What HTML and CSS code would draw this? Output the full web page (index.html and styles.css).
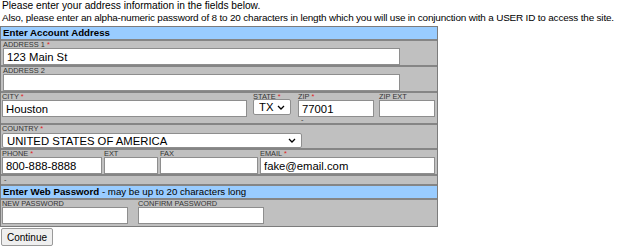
FILE: index.html
```html
<!DOCTYPE html>
<html>
<head>
<meta charset="utf-8">
<link rel="stylesheet" href="styles.css">
</head>
<body>
<div class="intro">
  <div>Please enter your address information in the fields below.</div>
  <div class="intro-2">Also, please enter an alpha-numeric password of 8 to 20 characters in length which you will use in conjunction with a USER ID to access the site.</div>
</div>
<form class="form">
  <div class="head">Enter Account Address</div>
  <div class="row">
    <div class="field w397"><label>ADDRESS 1 <span class="req">*</span></label><input type="text" value="123 Main St"></div>
  </div>
  <div class="row">
    <div class="field w397"><label>ADDRESS 2</label><input type="text" value=""></div>
  </div>
  <div class="row city-row">
    <div class="field w246"><label>CITY <span class="req">*</span></label><input type="text" value="Houston"></div>
    <div class="field w38 state"><label>STATE <span class="req">*</span></label><select><option>TX</option></select></div>
    <div class="field w76 zip"><label>ZIP <span class="req">*</span></label><input type="text" value="77001"><span class="dash">-</span></div>
    <div class="field w56 zipext"><label>ZIP EXT</label><input type="text" value=""></div>
  </div>
  <div class="row country-row">
    <div class="field w300"><label>COUNTRY <span class="req">*</span></label><select class="country"><option>UNITED STATES OF AMERICA</option></select></div>
  </div>
  <div class="row phone-row">
    <div class="field w100"><label>PHONE <span class="req">*</span></label><input type="text" value="800-888-8888"></div>
    <div class="field w54"><label>EXT</label><input type="text" value=""></div>
    <div class="field w98"><label>FAX</label><input type="text" value=""></div>
    <div class="field w176"><label>EMAIL <span class="req">*</span></label><input type="text" value="fake@email.com"></div>
  </div>
  <div class="row note-row"><span class="dash">-</span></div>
  <div class="head">Enter Web Password <span class="head-note">- may be up to 20 characters long</span></div>
  <div class="row pw-row">
    <div class="field w126"><label>NEW PASSWORD</label><input type="password" value=""></div>
    <div class="field w126"><label>CONFIRM PASSWORD</label><input type="password" value=""></div>
  </div>
</form>
<button class="btn" type="button">Continue</button>
</body>
</html>
```
FILE: styles.css
```css
body {
  margin: 0;
  padding: 0;
  font-family: "Liberation Sans", Arial, sans-serif;
  font-size: 10.2px;
  line-height: 11.5px;
  color: #000;
  background: #fff;
}

.intro {
  margin: 0 0 3px 2px;
  white-space: nowrap;
}

.intro-2 {
  font-size: 9.95px;
  letter-spacing: -0.18px;
}

.form {
  width: 436px;
  margin: 0;
  border: 1px solid #7c7c7c;
  background: #c0c0c0;
}

.head {
  background: #99ccff;
  font-weight: bold;
  font-size: 9.7px;
  line-height: 12px;
  height: 12px;
  padding: 0 2px;
  border-bottom: 2px solid #858585;
  white-space: nowrap;
}

.head-note {
  font-weight: normal;
}

.row {
  display: flex;
  align-items: flex-start;
  padding: 0 2px 0 1px;
  border-bottom: 2px solid #858585;
}

.field {
  display: flex;
  flex-direction: column;
}

.field label {
  display: block;
  font-size: 7.4px;
  line-height: 8px;
  height: 7px;
  color: #333;
  white-space: nowrap;
}

.req {
  color: #e02020;
}

.field input,
.field select {
  box-sizing: border-box;
  height: 17px;
  margin: 0;
  border: 1px solid #8e8e8e;
  background: #fff;
  font-family: "Liberation Sans", Arial, sans-serif;
  font-size: 11.3px;
  padding: 0 3px;
  color: #000;
  outline: none;
}

.field select {
  appearance: none;
  -webkit-appearance: none;
  border-radius: 2px;
  padding: 0 16px 0 5px;
  background-image: url("data:image/svg+xml,%3Csvg xmlns='http://www.w3.org/2000/svg' width='8' height='5' viewBox='0 0 8 5'%3E%3Cpath d='M1 1l3 3 3-3' fill='none' stroke='%23000' stroke-width='1.3'/%3E%3C/svg%3E");
  background-repeat: no-repeat;
  background-position: right 5px center;
}

.w397 { width: 397px; margin-left: 1px; }
.w246 { width: 246px; }
.w38 { width: 38px; }
.w76 { width: 76px; }
.w56 { width: 56px; }
.w300 { width: 300px; }
.w100 { width: 100px; }
.w54 { width: 54px; }
.w98 { width: 98px; }
.w176 { width: 176px; }
.w126 { width: 126px; }

.state { margin-left: 6px; }
.state select { height: 16px; margin-top: -1px; }
.zip { margin-left: 7px; }
.zipext { margin-left: 5px; }

.dash {
  display: block;
  font-size: 7.4px;
  line-height: 6px;
  height: 6px;
  padding-left: 3px;
  color: #333;
}

.country-row label { height: 8px; }
.country-row select { height: 15px; padding-left: 4px; }

.phone-row .field + .field { margin-left: 2px; }

.note-row {
  height: 8px;
  padding-left: 3px;
}

.note-row .dash {
  line-height: 7px;
  height: 8px;
  padding-left: 0;
}

.pw-row { padding-bottom: 2px; border-bottom: 0; }
.pw-row .field + .field { margin-left: 10px; }

.btn {
  display: block;
  margin: 1px 0 0 1px;
  font-family: "Liberation Sans", Arial, sans-serif;
  font-size: 10px;
  height: 18px;
  padding: 0 5px;
  border: 1px solid #9a9a9a;
  border-radius: 2px;
  background: #efefef;
  color: #000;
}
```
